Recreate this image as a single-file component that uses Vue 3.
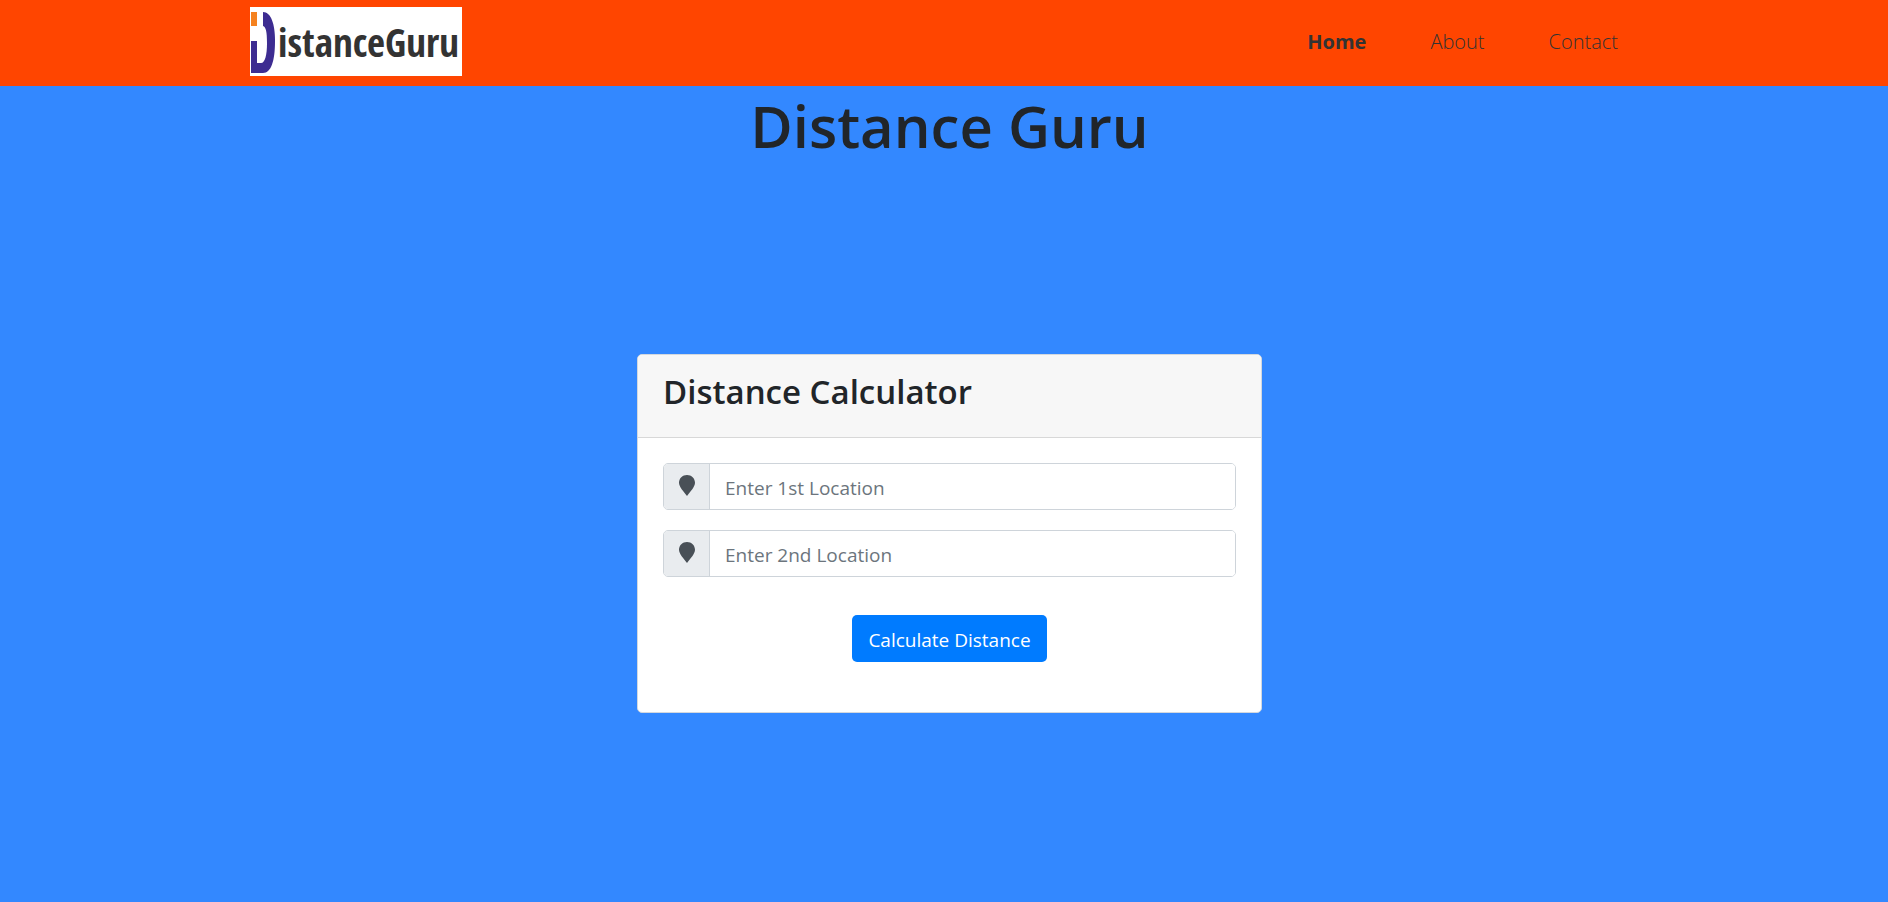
<script setup>
import { ref } from 'vue'

const links = [
  { label: 'Home', active: true },
  { label: 'About', active: false },
  { label: 'Contact', active: false },
]
const fields = ref([
  { id: 'location-1', hint: 'Enter 1st Location', value: '' },
  { id: 'location-2', hint: 'Enter 2nd Location', value: '' },
])
</script>

<template>
  <div class="page">
    <header class="bar">
      <div class="container">
        <a class="logo" href="#" aria-label="DistanceGuru">
          <svg class="mark" width="26" height="69" viewBox="0 0 26 69" aria-hidden="true">
            <rect x="1" y="5" width="6" height="14" fill="#f58220" />
            <path d="M13 5C21 5 25 17 25 34C25 54 21 66 13 66H1V34H7V56H11C15 56 17 48 17 36C17 25 16 20 13 19Z" fill="#3d2c91" />
          </svg>
          <span class="wordmark">istanceGuru</span>
        </a>
        <nav class="nav">
          <a v-for="l in links" :key="l.label" href="#" class="link" :class="{ active: l.active }">{{ l.label }}</a>
        </nav>
      </div>
    </header>

    <main class="main">
      <h1 class="title">Distance Guru</h1>
      <section class="card">
        <h2 class="card-head">Distance Calculator</h2>
        <form class="card-body" @submit.prevent>
          <div v-for="f in fields" :key="f.id" class="group">
            <label class="addon" :for="f.id" :aria-label="f.hint">
              <svg class="pin" width="16" height="21" viewBox="0 0 16 21" aria-hidden="true">
                <path d="M8 0C3.500 0 0 3.400 0 7.700C0 11.500 4.500 16.500 8 21C11.500 16.500 16 11.500 16 7.700C16 3.400 12.500 0 8 0Z" fill="#495057" />
              </svg>
            </label>
            <input :id="f.id" v-model="f.value" class="input" type="text" :placeholder="f.hint" />
          </div>
          <button class="button" type="submit">Calculate Distance</button>
        </form>
      </section>
    </main>
  </div>
</template>

<style>
body {
  margin: 0;
  background: #3388ff;
}
</style>

<style scoped>
.page {
  min-height: 100vh;
  background: #3388ff;
  color: #212529;
  font-family: "Segoe UI", "Open Sans", "Noto Sans", sans-serif;
  font-size: 19px;
}
.page * {
  box-sizing: border-box;
}
.bar {
  background: #ff4500;
}
.container {
  display: flex;
  align-items: center;
  justify-content: space-between;
  max-width: 1408px;
  margin: 0 auto;
  padding: 7px 30px 10px 10px;
}
.logo {
  display: flex;
  align-items: center;
  gap: 2px;
  width: 212px;
  height: 69px;
  background: #fff;
  color: #333;
  text-decoration: none;
}
.mark {
  flex: none;
}
.wordmark {
  font-family: "Open Sans Condensed", "Liberation Sans Narrow", "DejaVu Sans Condensed", sans-serif;
  font-size: 39px;
  line-height: 69px;
}
.nav {
  display: flex;
  gap: 64px;
}
.link {
  color: #333;
  font-size: 20px;
  font-weight: 300;
  line-height: 32px;
  text-decoration: none;
}
.link.active {
  font-weight: 700;
}
.main {
  display: flex;
  flex-direction: column;
  align-items: center;
  padding: 2px 0 40px 11px;
}
.title {
  margin: 0;
  font-size: 58px;
  font-weight: 600;
  line-height: 76px;
}
.card {
  width: 625px;
  max-width: 100%;
  margin-top: 190px;
  border: 1px solid #d3d8de;
  border-radius: 5px;
  background: #fff;
  overflow: hidden;
}
.card-head {
  margin: 0;
  padding: 16px 25px 24px;
  border-bottom: 1px solid #d8d8d8;
  background: #f7f7f7;
  font-size: 33px;
  font-weight: 600;
  line-height: 42px;
}
.card-body {
  display: flex;
  flex-direction: column;
  align-items: center;
  gap: 20px;
  padding: 25px 25px 50px;
}
.group {
  display: flex;
  width: 100%;
  height: 47px;
  border: 1px solid #ced4da;
  border-radius: 5px;
  overflow: hidden;
}
.addon {
  display: flex;
  align-items: center;
  justify-content: center;
  flex: none;
  width: 46px;
  padding-bottom: 2px;
  border-right: 1px solid #ced4da;
  background: #e9ecef;
}
.input {
  flex: 1;
  min-width: 0;
  padding: 3px 15px 0;
  border: 0;
  outline: 0;
  background: #fff;
  color: #495057;
  font: inherit;
}
.input::placeholder {
  color: #6c757d;
  opacity: 1;
}
.button {
  height: 47px;
  margin-top: 18px;
  padding: 2px 16px 0;
  border: 0;
  border-radius: 5px;
  background: #007bff;
  color: #fff;
  font: inherit;
  cursor: pointer;
}
</style>
